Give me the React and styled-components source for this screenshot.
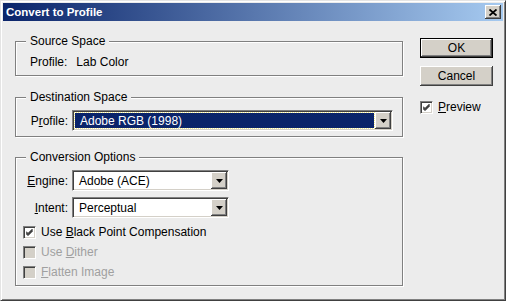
import React from "react";
import styled, { createGlobalStyle, css } from "styled-components";

const GlobalStyle = createGlobalStyle`
  html, body {
    margin: 0;
    padding: 0;
    background: #ececec;
  }
  body {
    font-family: "Liberation Sans", Arial, sans-serif;
    font-size: 12px;
    color: #000;
  }
`;

const raised = css`
  background: #d4d0c8;
  box-shadow: inset -1px -1px #404040, inset 1px 1px #fff, inset -2px -2px #808080;
`;

const Window = styled.div`
  width: 506px;
  height: 301px;
  box-sizing: border-box;
  background: #ececec;
  border: 1px solid;
  border-color: #e4e4e4 #404040 #404040 #e4e4e4;
  box-shadow: inset 1px 1px #fff, inset -1px -1px #808080;
  padding: 2px;
  display: flex;
  flex-direction: column;
`;

const TitleBar = styled.div`
  height: 18px;
  flex-shrink: 0;
  display: flex;
  align-items: center;
  justify-content: space-between;
  background: linear-gradient(to right, #0a246a, #a6caf0);
  padding: 0 2px 0 3px;
`;

const Title = styled.span`
  color: #fff;
  font-weight: bold;
  font-size: 11.5px;
`;

const CloseButton = styled.div`
  width: 16px;
  height: 14px;
  display: flex;
  align-items: center;
  justify-content: center;
  ${raised}
`;

const Body = styled.div`
  flex: 1;
  display: flex;
  padding: 14px 0 0 12px;
`;

const LeftColumn = styled.div`
  width: 388px;
  display: flex;
  flex-direction: column;
`;

const Group = styled.fieldset`
  margin: ${(p) => p.$top || 0}px 0 0 0;
  padding: 0;
  min-width: 0;
  height: ${(p) => p.$h}px;
  box-sizing: border-box;
  border: 1px solid #808080;
  box-shadow: inset 1px 1px #fff, 1px 1px #fff;
`;

const Legend = styled.legend`
  margin-left: 10px;
  padding: 0 4px;
  line-height: 13px;
  background: #ececec;
`;

const StaticRow = styled.div`
  margin-top: 8px;
  padding-left: 14px;
  line-height: 13px;
  display: flex;
  gap: 9px;
`;

const FieldRow = styled.div`
  display: flex;
  align-items: center;
  margin-top: ${(p) => p.$top}px;
  padding-left: 10px;
`;

const FieldLabel = styled.span`
  width: 42px;
  text-align: right;
  margin-right: 4px;
`;

const Select = styled.div`
  width: ${(p) => p.$w}px;
  height: 21px;
  box-sizing: border-box;
  background: #fff;
  border: 1px solid;
  border-color: #808080 #fff #fff #808080;
  box-shadow: inset 1px 1px #404040, inset -1px -1px #d4d0c8;
  padding: 1px;
  display: flex;
  align-items: stretch;
`;

const SelectValue = styled.div`
  flex: 1;
  display: flex;
  align-items: center;
  padding-left: 4px;
  margin: 1px;
  ${(p) =>
    p.$selected &&
    css`
      background: #0a246a;
      color: #fff;
      outline: 1px dotted #f4ec8c;
      padding-left: 5px;
    `}
`;

const DropButton = styled.div`
  width: 16px;
  display: flex;
  align-items: center;
  justify-content: center;
  ${raised}
`;

const CheckRow = styled.label`
  display: flex;
  align-items: center;
  gap: 5px;
  height: 13px;
  line-height: 13px;
  margin-top: ${(p) => p.$top || 0}px;
  padding-left: ${(p) => p.$indent || 0}px;
  color: ${(p) => (p.$disabled ? "#a0a0a0" : "#000")};
`;

const Box = styled.span`
  width: 13px;
  height: 13px;
  box-sizing: border-box;
  flex-shrink: 0;
  display: flex;
  align-items: center;
  justify-content: center;
  background: ${(p) => (p.$disabled ? "#d4d0c8" : "#fff")};
  border: 1px solid;
  border-color: #808080 #fff #fff #808080;
  box-shadow: inset 1px 1px #404040, inset -1px -1px #d4d0c8;
`;

const RightColumn = styled.div`
  margin-left: 17px;
  padding-top: 3px;
  width: 73px;
  display: flex;
  flex-direction: column;
`;

const PushButton = styled.div`
  width: 73px;
  height: 20px;
  box-sizing: border-box;
  display: flex;
  align-items: center;
  justify-content: center;
  margin-bottom: 8px;
  ${raised}
  ${(p) =>
    p.$default &&
    css`
      border: 1px solid #000;
    `}
`;

const Accel = styled.span`
  text-decoration: underline;
  text-underline-offset: 1px;
`;

const CheckMark = () => (
  <svg width="7" height="7" viewBox="0 0 7 7">
    <path d="M0 2.5 L2 4.5 L6.5 0 M0 3.5 L2 5.5 L6.5 1 M0 4.5 L2 6.5 L6.5 2" stroke="#000" strokeWidth="1" fill="none" />
  </svg>
);

const Arrow = () => (
  <svg width="7" height="4" viewBox="0 0 7 4">
    <polygon points="0,0 7,0 3.5,4" fill="#000" />
  </svg>
);

const CloseGlyph = () => (
  <svg width="8" height="7" viewBox="0 0 8 7">
    <path d="M0.5 0.5 L7.5 6.5 M7.5 0.5 L0.5 6.5" stroke="#000" strokeWidth="1.8" />
  </svg>
);

const Check = ({ checked, disabled, children, top, indent }) => (
  <CheckRow $top={top} $indent={indent} $disabled={disabled}>
    <Box $disabled={disabled}>{checked && <CheckMark />}</Box>
    <span>{children}</span>
  </CheckRow>
);

const App = () => {
  return (
    <>
      <GlobalStyle />
      <Window>
        <TitleBar>
          <Title>Convert to Profile</Title>
          <CloseButton>
            <CloseGlyph />
          </CloseButton>
        </TitleBar>
        <Body>
          <LeftColumn>
            <Group $h={41}>
              <Legend>Source Space</Legend>
              <StaticRow>
                <span>Profile:</span>
                <span>Lab Color</span>
              </StaticRow>
            </Group>
            <Group $h={46} $top={15}>
              <Legend>Destination Space</Legend>
              <FieldRow $top={6}>
                <FieldLabel>
                  P<Accel>r</Accel>ofile:
                </FieldLabel>
                <Select $w={321}>
                  <SelectValue $selected>Adobe RGB (1998)</SelectValue>
                  <DropButton>
                    <Arrow />
                  </DropButton>
                </Select>
              </FieldRow>
            </Group>
            <Group $h={135} $top={14}>
              <Legend>Conversion Options</Legend>
              <FieldRow $top={6}>
                <FieldLabel>
                  <Accel>E</Accel>ngine:
                </FieldLabel>
                <Select $w={157}>
                  <SelectValue>Adobe (ACE)</SelectValue>
                  <DropButton>
                    <Arrow />
                  </DropButton>
                </Select>
              </FieldRow>
              <FieldRow $top={6}>
                <FieldLabel>
                  <Accel>I</Accel>ntent:
                </FieldLabel>
                <Select $w={157}>
                  <SelectValue>Perceptual</SelectValue>
                  <DropButton>
                    <Arrow />
                  </DropButton>
                </Select>
              </FieldRow>
              <Check checked top={8} indent={7}>
                Use <Accel>B</Accel>lack Point Compensation
              </Check>
              <Check disabled top={7} indent={7}>
                Use <Accel>D</Accel>ither
              </Check>
              <Check disabled top={7} indent={7}>
                <Accel>F</Accel>latten Image
              </Check>
            </Group>
          </LeftColumn>
          <RightColumn>
            <PushButton $default>OK</PushButton>
            <PushButton>Cancel</PushButton>
            <Check checked top={7}>
              <Accel>P</Accel>review
            </Check>
          </RightColumn>
        </Body>
      </Window>
    </>
  );
};

export default App;
